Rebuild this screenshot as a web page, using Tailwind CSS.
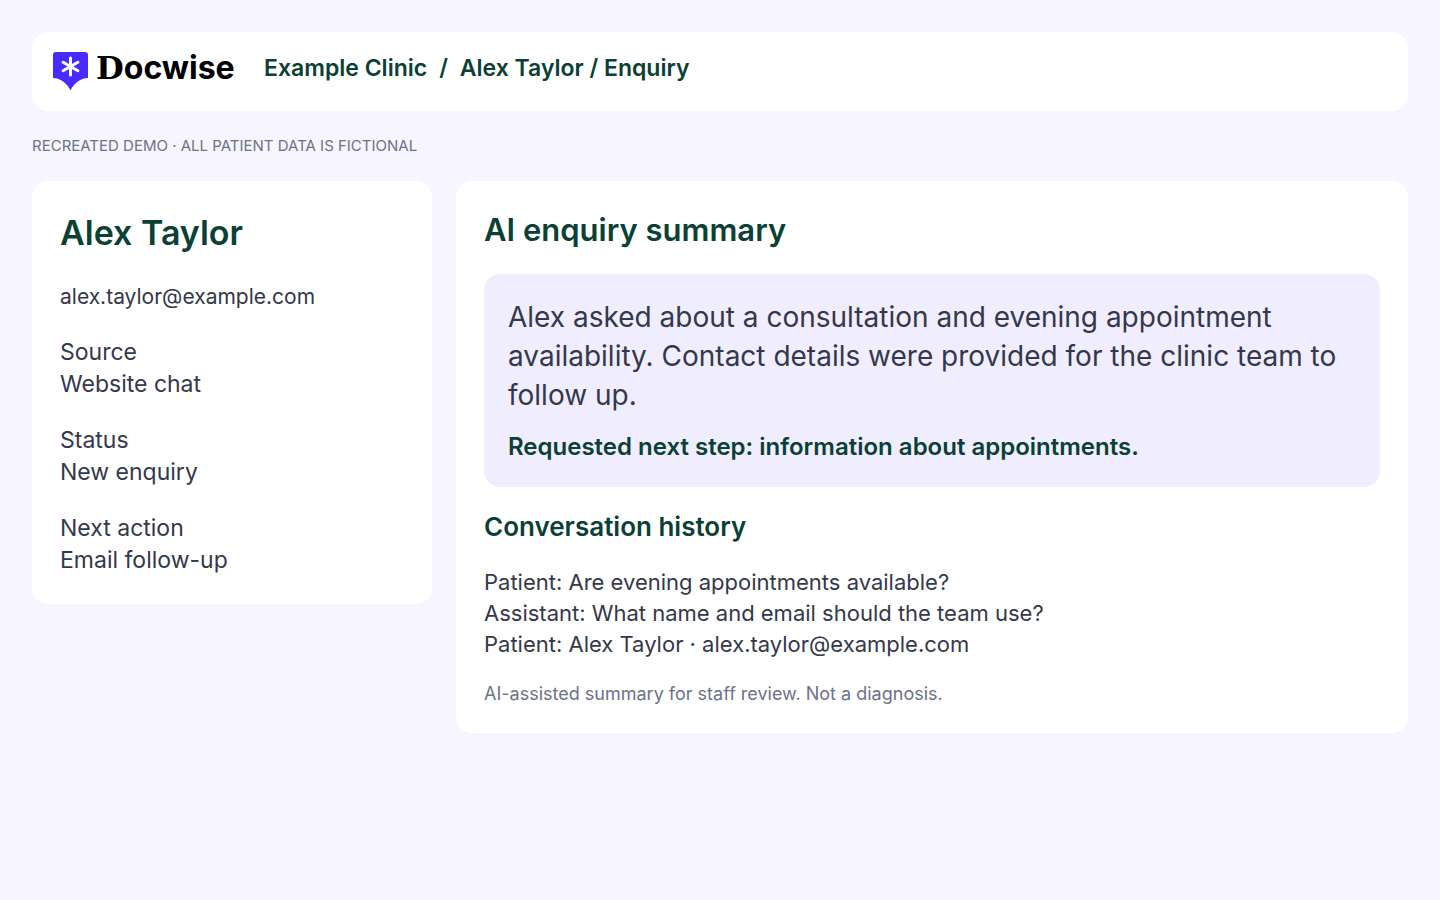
<!DOCTYPE html>
<html lang="en">
  <head>
    <meta charset="UTF-8" />
    <meta name="viewport" content="width=device-width, initial-scale=1.0" />
    <title>Docwise - Alex Taylor</title>
    <script src="https://cdn.jsdelivr.net/npm/@tailwindcss/browser@4"></script>
  </head>
  <body class="min-h-screen bg-[#f7f5ff] p-8 font-['Inter',sans-serif] text-[#34384b]">
    <header class="flex items-start gap-8 rounded-2xl bg-white p-5 text-[#0b4034]">
      <a href="#" class="flex w-[180px] items-start gap-[7px] text-black" aria-label="Docwise">
        <svg class="h-[39px] w-[37px] shrink-0" viewBox="0 0 37 39" fill="none">
          <path d="M4 0H33Q36 0 36 3V26C28 26.500 22 31 18.500 38.500C15 31 9 26.500 1 26V3Q1 0 4 0Z" fill="#4a2bff" />
          <path d="M18.500 6V23M11.100 10.200L25.900 18.800M25.900 10.200L11.100 18.800" stroke="#fff" stroke-width="3" stroke-linecap="round" />
        </svg>
        <span class="text-[32px] leading-8 font-bold"><span class="font-['DejaVu_Serif',serif] font-bold">D</span>ocwise</span>
      </a>
      <nav class="flex gap-3 text-[23px] leading-8 font-semibold" aria-label="Breadcrumb">
        <a href="#">Example Clinic</a>
        <span>/</span>
        <span>Alex Taylor / Enquiry</span>
      </nav>
    </header>

    <p class="mt-6 text-[15px] leading-[22px] text-[#6c7288]">RECREATED DEMO · ALL PATIENT DATA IS FICTIONAL</p>

    <main class="mt-6 grid grid-cols-[400px_1fr] items-start gap-6">
      <aside class="rounded-2xl bg-white p-7 text-[23px] leading-8">
        <h1 class="text-[34px] leading-[48px] font-semibold text-[#0b4034]">Alex Taylor</h1>
        <p class="mt-6 text-[21px] leading-[31px]">alex.taylor@example.com</p>
        <dl class="mt-6 grid gap-6">
          <div>
            <dt>Source</dt>
            <dd>Website chat</dd>
          </div>
          <div>
            <dt>Status</dt>
            <dd>New enquiry</dd>
          </div>
          <div>
            <dt>Next action</dt>
            <dd>Email follow-up</dd>
          </div>
        </dl>
      </aside>

      <section class="rounded-2xl bg-white p-7">
        <h2 class="text-[31px] leading-[41px] font-semibold text-[#0b4034]">AI enquiry summary</h2>
        <div class="mt-6 rounded-2xl bg-[#f0edff] p-6">
          <p class="text-[28px] leading-[39px]">
            Alex asked about a consultation and evening appointment availability.
            Contact details were provided for the clinic team to follow up.
          </p>
          <p class="mt-4 text-[24px] leading-8 font-semibold text-[#0b4034]">Requested next step: information about appointments.</p>
        </div>
        <h3 class="mt-6 text-[26px] leading-8 font-semibold text-[#0b4034]">Conversation history</h3>
        <div class="mt-6 text-[22px] leading-[31px]">
          <p>Patient: Are evening appointments available?</p>
          <p>Assistant: What name and email should the team use?</p>
          <p>Patient: Alex Taylor · alex.taylor@example.com</p>
        </div>
        <p class="mt-[22px] text-[18px] leading-[23px] text-[#6c7288]">AI-assisted summary for staff review. Not a diagnosis.</p>
      </section>
    </main>
  </body>
</html>
